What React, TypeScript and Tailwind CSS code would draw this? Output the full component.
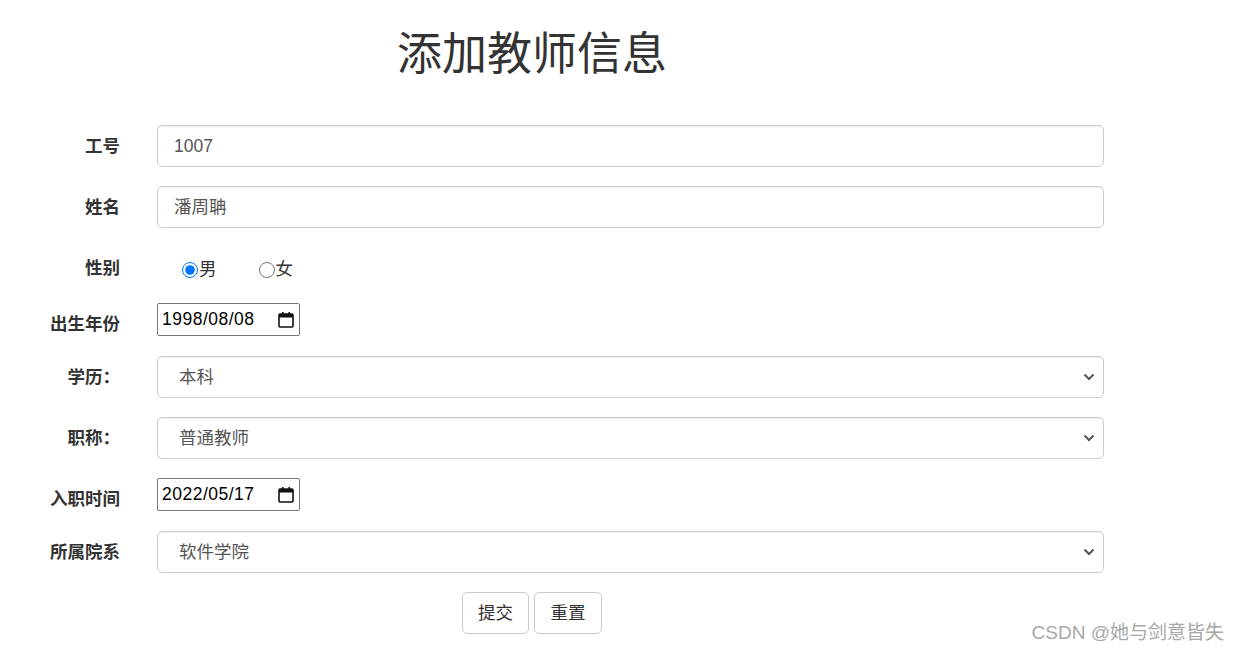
const font = { fontFamily: '"Liberation Sans", "Noto Sans CJK SC", sans-serif' };

function Label({ text }: { text: string }) {
  return (
    <div className="w-[120px] shrink-0 pt-[9px] text-right text-[17.5px] font-bold leading-[25px] text-[#333]">
      {text}
    </div>
  );
}

function TextInput({ value }: { value: string }) {
  return (
    <div className="flex h-[42px] w-[947px] items-center rounded-[5px] border border-[#ccc] bg-white pl-[16px] text-[17.5px] text-[#555] shadow-[inset_0_1px_1px_rgba(0,0,0,0.075)]">
      {value}
    </div>
  );
}

function SelectBox({ value }: { value: string }) {
  return (
    <div className="flex h-[42px] w-[947px] items-center justify-between rounded-[5px] border border-[#ccc] bg-white pl-[21px] pr-[7px] text-[17.5px] text-[#555] shadow-[inset_0_1px_1px_rgba(0,0,0,0.075)]">
      <span>{value}</span>
      <svg width="12" height="8" viewBox="0 0 12 8" className="mr-[1px]">
        <path d="M1.5 1.5 L6 6 L10.5 1.5" fill="none" stroke="#555" strokeWidth="2" />
      </svg>
    </div>
  );
}

function DateBox({ value }: { value: string }) {
  return (
    <div className="flex h-[33px] w-[143px] items-center justify-between rounded-[2px] border border-[#767676] bg-white pl-[4px] pr-[4px] text-[17.5px] tracking-[0.5px] text-black">
      <span>{value}</span>
      <svg width="18" height="18" viewBox="0 0 18 18">
        <rect x="2" y="3" width="14" height="13" rx="1" fill="none" stroke="#111" strokeWidth="1.6" />
        <rect x="2" y="3" width="14" height="3.5" fill="#111" />
        <rect x="5" y="1" width="1.6" height="3" fill="#111" />
        <rect x="11.4" y="1" width="1.6" height="3" fill="#111" />
      </svg>
    </div>
  );
}

function Row({ label, children }: { label: string; children: React.ReactNode }) {
  return (
    <div className="flex items-start gap-[37px]">
      <Label text={label} />
      {children}
    </div>
  );
}

export default function App() {
  return (
    <div className="relative h-[651px] w-[1239px] overflow-hidden bg-white" style={font}>
      <h1 className="pl-[397px] pt-[32px] text-[45px] font-normal leading-[46px] text-[#333]">添加教师信息</h1>

      <div className="mt-[47px] flex flex-col gap-[19px]">
        <Row label="工号">
          <TextInput value="1007" />
        </Row>
        <Row label="姓名">
          <TextInput value="潘周聃" />
        </Row>
        <Row label="性别">
          <div className="flex h-[37px] items-start pl-[25px] pt-[10px] text-[17.5px] leading-[25px] text-[#333]">
            <label className="flex items-center">
              <input type="radio" name="sex" defaultChecked className="m-0 h-[16px] w-[16px]" />
              <span className="ml-[1px]">男</span>
            </label>
            <label className="ml-[42px] flex items-center">
              <input type="radio" name="sex" className="m-0 h-[16px] w-[16px]" />
              <span className="ml-[1px]">女</span>
            </label>
          </div>
        </Row>
        <Row label="出生年份">
          <div className="h-[34px]">
            <DateBox value="1998/08/08" />
          </div>
        </Row>
        <Row label="学历：">
          <SelectBox value="本科" />
        </Row>
        <Row label="职称：">
          <SelectBox value="普通教师" />
        </Row>
        <Row label="入职时间">
          <div className="h-[34px]">
            <DateBox value="2022/05/17" />
          </div>
        </Row>
        <Row label="所属院系">
          <SelectBox value="软件学院" />
        </Row>
        <div className="flex gap-[5px] pl-[462px]">
          <button className="h-[42px] w-[67px] rounded-[5px] border border-[#ccc] bg-white text-[17.5px] text-[#333]">
            提交
          </button>
          <button className="h-[42px] w-[68px] rounded-[5px] border border-[#ccc] bg-white text-[17.5px] text-[#333]">
            重置
          </button>
        </div>
      </div>

      <div className="absolute bottom-[4px] right-[15px] text-[19px] text-[#a8a8a8]">CSDN @她与剑意皆失</div>
    </div>
  );
}
